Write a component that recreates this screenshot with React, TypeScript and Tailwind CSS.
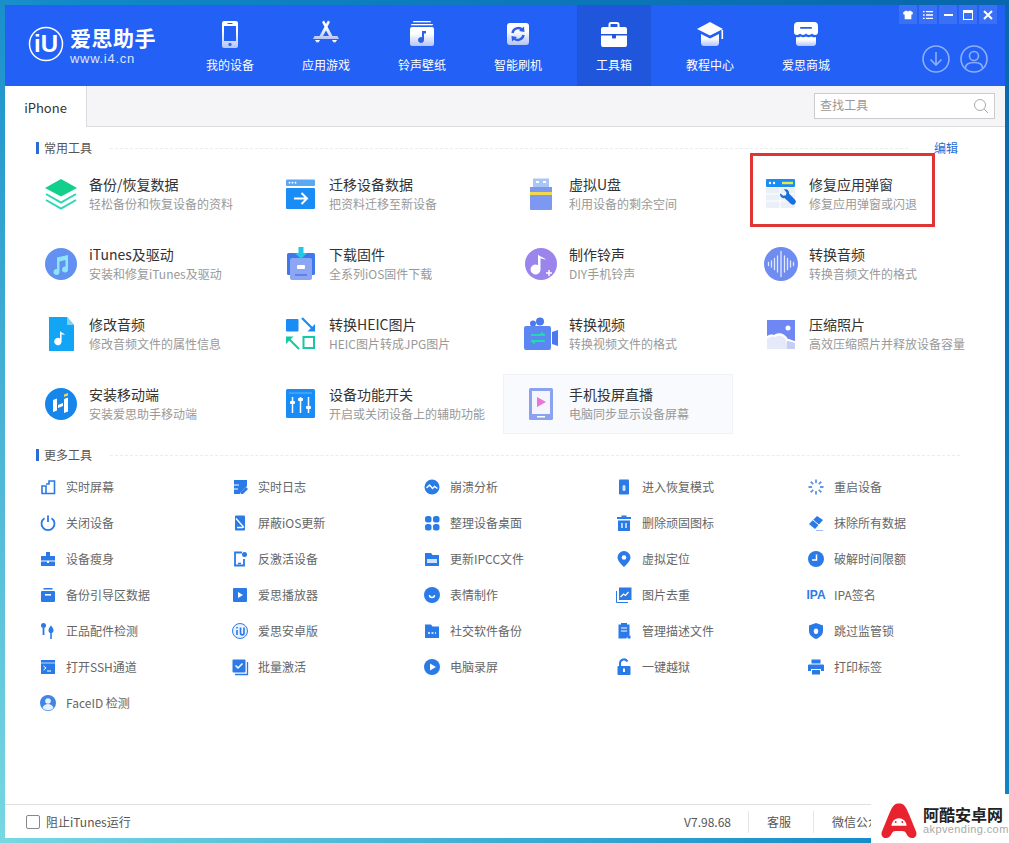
import type { ReactNode } from "react";

const F = "url(#navFill)";
const B = "#2a7ae8";

const navItems: { label: string; active?: boolean; icon: ReactNode }[] = [
  {
    label: "我的设备",
    icon: (
      <>
        <path fill={F} fillRule="evenodd" d="M9 2h12a2 2 0 0 1 2 2v23a2 2 0 0 1-2 2H9a2 2 0 0 1-2-2V4a2 2 0 0 1 2-2Zm0 5v15h12V7H9Zm3.500-3v1h5V4h-5Z" />
        <circle cx="15" cy="25.500" r="1.700" fill="#3d6cf0" />
      </>
    ),
  },
  {
    label: "应用游戏",
    icon: (
      <>
        <path fill={F} d="M11 3 13 1.500l2 3.500 2-3.500L19 3l-2.500 4.700L21.500 17H26.500l1.500 3H2l1.500-3h5L13.500 7.700Zm1 14h6l-3-5.500Z" />
        <path fill={F} d="M4 21h5l-1.500 2.500H5.500ZM21 21h5l-1.500 2.500h-2Z" />
      </>
    ),
  },
  {
    label: "铃声壁纸",
    icon: (
      <>
        <rect x="6" y="2" width="18" height="1.500" rx=".7" fill={F} />
        <rect x="4" y="5" width="22" height="1.500" rx=".7" fill={F} />
        <rect x="3" y="8" width="24" height="19" rx="2" fill={F} />
        <path fill="#2f5fe8" d="M15 12h4v2.500h-2V21a3 3 0 1 1-2-2.800Z" />
      </>
    ),
  },
  {
    label: "智能刷机",
    icon: (
      <>
        <rect x="4" y="4" width="22" height="22" rx="3" fill={F} />
        <path fill="none" stroke="#2f5fe8" strokeWidth="2.400" d="M9.500 14a5.800 5.800 0 0 1 10-3M20.500 16a5.800 5.800 0 0 1-10 3" />
        <path fill="#2f5fe8" d="m21 7.500.5 5.500-5.500-1ZM9 22.500 8.500 17l5.500 1Z" />
      </>
    ),
  },
  {
    label: "工具箱",
    active: true,
    icon: (
      <>
        <path fill="none" stroke="#fff" strokeWidth="2" d="M10.500 9V5.500a1.500 1.500 0 0 1 1.500-1.500h6a1.500 1.500 0 0 1 1.500 1.500V9" />
        <path fill="#fff" d="M4 8h22a2 2 0 0 1 2 2v5H2v-5a2 2 0 0 1 2-2ZM2 16.500h11v2a1 1 0 0 0 1 1h2a1 1 0 0 0 1-1v-2h11V26a2 2 0 0 1-2 2H4a2 2 0 0 1-2-2Z" />
      </>
    ),
  },
  {
    label: "教程中心",
    icon: (
      <>
        <path fill="#fff" d="M15 3 28 10 15 16.500 2 10Z" />
        <path fill={F} d="M6 15l9 4.500 9-4.500v9a3 3 0 0 1-3 3H9a3 3 0 0 1-3-3Z" />
        <rect x="26.500" y="11" width="1.600" height="9" fill="#fff" />
      </>
    ),
  },
  {
    label: "爱思商城",
    icon: (
      <>
        <path fill="#fff" d="M7 3h16a4 4 0 0 1 4 4v6a3 3 0 0 1-3 3c-1.500 0-2.500-1-3-1.500-.6.500-1.700 1.500-3 1.500s-2.400-1-3-1.500c-.6.500-1.700 1.500-3 1.500s-2.400-1-3-1.500c-.5.500-1.500 1.500-3 1.500a3 3 0 0 1-3-3V7a4 4 0 0 1 4-4Z" />
        <rect x="9" y="8" width="12" height="1.800" rx=".9" fill="#2f5fe8" />
        <path fill={F} d="M5 18c1.500.6 3 .5 4.500-.5 1.800 1 3.700 1 5.500 0 1.800 1 3.700 1 5.500 0 1.500 1 3 1.100 4.500.5v6a3 3 0 0 1-3 3H8a3 3 0 0 1-3-3Z" />
      </>
    ),
  },
];

const Big = ({ children }: { children: ReactNode }) => (
  <svg viewBox="0 0 36 36" className="h-[36px] w-[36px] shrink-0">
    {children}
  </svg>
);

const tools: { title: string; sub: string; hover?: boolean; boxed?: boolean; icon?: ReactNode }[] = [
  {
    title: "备份/恢复数据",
    sub: "轻松备份和恢复设备的资料",
    icon: (
      <>
        <path fill="#12cf8c" d="M18 3 34 12 18 20.500 2 12Z" />
        <path fill="none" stroke="#2cd5b5" strokeWidth="2" d="m3 18 15 8.500L33 18" />
        <path fill="none" stroke="#2cd5b5" strokeWidth="2" d="m3 24 15 8.500L33 24" />
      </>
    ),
  },
  {
    title: "迁移设备数据",
    sub: "把资料迁移至新设备",
    icon: (
      <>
        <rect x="3" y="3.500" width="29" height="6.500" rx="1" fill="#5aa8f2" />
        <circle cx="6.500" cy="6.700" r=".9" fill="#fff" />
        <circle cx="9.500" cy="6.700" r=".9" fill="#fff" />
        <circle cx="12.500" cy="6.700" r=".9" fill="#fff" />
        <rect x="3" y="12" width="29" height="21" rx="1" fill="#1a8cf6" />
        <path fill="none" stroke="#fff" strokeWidth="2" d="M11 22.500h13M18.500 17l5.500 5.500-5.500 5.500" />
      </>
    ),
  },
  {
    title: "虚拟U盘",
    sub: "利用设备的剩余空间",
    icon: (
      <>
        <path fill="#a9c6f6" d="M10 2.500h16V11H10Z" />
        <rect x="13" y="5" width="3" height="2" fill="#fff" />
        <rect x="20" y="5" width="3" height="2" fill="#fff" />
        <path fill="#7c98f0" d="M7 11h22v22a1 1 0 0 1-1 1H8a1 1 0 0 1-1-1Z" />
        <rect x="7" y="16" width="22" height="3" fill="#f2d94b" />
      </>
    ),
  },
  {
    title: "修复应用弹窗",
    sub: "修复应用弹窗或闪退",
    boxed: true,
    icon: (
      <>
        <rect x="3" y="12" width="29" height="20" fill="#eaeff8" />
        <path stroke="#fff" d="M3 18h29M3 25h29M17 12v20" />
        <rect x="3" y="3" width="29" height="8" rx="1" fill="#1a8cf6" />
        <circle cx="7" cy="7" r="1.200" fill="#fff" />
        <circle cx="11" cy="7" r="1.200" fill="#fff" />
        <rect x="19" y="5.800" width="11" height="2.400" fill="#e6e84a" />
        <path fill="#1670e0" d="M21 13.500c2.800-1 5.500 1.200 5 4l6 6.300c1 1 1.200 2.300.3 3.400l-1 1c-1 1-2.300.8-3.300-.1l-6.500-6c-2.700.5-5-2-4.300-4.800l3 2.500 2.700-.5.600-2.700Z" />
      </>
    ),
  },
  {
    title: "iTunes及驱动",
    sub: "安装和修复iTunes及驱动",
    icon: (
      <>
        <circle cx="18" cy="18" r="16" fill="#6391f2" />
        <path fill="#8ce5f5" d="M14 11.500 25 9v14.500a3 3 0 1 1-2.500-3V14l-6 1.400v10.600a3 3 0 1 1-2.500-3Z" />
      </>
    ),
  },
  {
    title: "下载固件",
    sub: "全系列iOS固件下载",
    icon: (
      <>
        <rect x="4" y="7" width="28" height="22" rx="1.500" fill="#3e78ea" />
        <rect x="7" y="12" width="22" height="22" rx="2" fill="#8ca6f5" />
        <rect x="14" y="19" width="8" height="4" rx="1" fill="#fff" />
        <rect x="12" y="28" width="12" height="2" fill="#5f82ea" />
        <path fill="#22c8e8" d="M15.500 1h5v6h3.500L18 13l-6-6h3.500Z" />
      </>
    ),
  },
  {
    title: "制作铃声",
    sub: "DIY手机铃声",
    icon: (
      <>
        <circle cx="18" cy="18" r="16" fill="#9b85ec" />
        <path fill="#fff" d="M15 8.500c3 3 6 2.500 8 5.500-2-1-4-1.500-5.500-1.500v11a5 5 0 1 1-2.500-4.300Z" />
        <path stroke="#fff" strokeWidth="1.500" d="M26 24v6M23 27h6" />
      </>
    ),
  },
  {
    title: "转换音频",
    sub: "转换音频文件的格式",
    icon: (
      <>
        <circle cx="18" cy="18" r="17" fill="#6f8cf0" />
        <path stroke="#dfe8ff" strokeWidth="1.300" strokeLinecap="round" d="M5.500 16.500v3M8.500 15v6M11.500 12.500v11M14.500 10v16M18 5.500v25M21.500 10v16M24.500 12.500v11M27.500 15v6M30.500 16.500v3" />
      </>
    ),
  },
  {
    title: "修改音频",
    sub: "修改音频文件的属性信息",
    icon: (
      <>
        <path fill="#12a5f5" d="M6 1h18l7 8v26H6Z" />
        <path fill="#7fd0fa" d="M24 1l7 8h-7Z" />
        <path fill="#fff" d="M17 15c1.500 2 4 2 5 4-1.500-.5-2.600-.8-3.400-.8v7.300a3.700 3.700 0 1 1-1.600-3Z" />
      </>
    ),
  },
  {
    title: "转换HEIC图片",
    sub: "HEIC图片转成JPG图片",
    icon: (
      <>
        <rect x="3" y="3" width="12.500" height="12.500" rx="1" fill="#1a8cf6" />
        <path fill="none" stroke="#1a8cf6" strokeWidth="2.200" d="m19 2 12 12" />
        <path fill="#1a8cf6" d="M32 8v7.500h-7.500Z" />
        <path fill="none" stroke="#16c9a5" strokeWidth="2" d="M20.500 21h10.500v11H20.500ZM16 33 5 22" />
        <path fill="#16c9a5" d="M3 28v-7.500h7.500Z" />
      </>
    ),
  },
  {
    title: "转换视频",
    sub: "转换视频文件的格式",
    icon: (
      <>
        <circle cx="10" cy="7.500" r="3" fill="#4b79ee" />
        <circle cx="17" cy="5.500" r="4" fill="#4b79ee" />
        <rect x="1" y="10" width="27" height="24" rx="2" fill="#5c86f2" />
        <path fill="#4b79ee" d="M29 16l6-2v16l-6-2Z" />
        <path stroke="#22d8b0" strokeWidth="1.800" d="M8 19h14M8 25h14" />
        <path fill="#22d8b0" d="m18 15.500 5 3.500h-5ZM12 28.500 7 25h5Z" />
      </>
    ),
  },
  {
    title: "压缩照片",
    sub: "高效压缩照片并释放设备容量",
    icon: (
      <>
        <path fill="#6f87f2" d="M4 4h28v21c-4-1-5-2-7-2-3-6-10-7-14-4-3-1-5 0-7 1Z" />
        <circle cx="25" cy="12" r="2.500" fill="#fff" />
        <path fill="#e6eaf8" d="M4 23c3-2 5-3 8-2 5-3 10-1 12 6v6H4Z" />
        <path fill="#c5cff5" d="M24 25c3 0 5 1 8 2v6h-8Z" />
      </>
    ),
  },
  {
    title: "安装移动端",
    sub: "安装爱思助手移动端",
    icon: (
      <>
        <circle cx="18" cy="18" r="16" fill="#1686ec" />
        <path fill="#fff" d="m10 14 4-1.500v12l-4 1.500ZM21 13l4-1.500v14l-4 1.500ZM15 19l5-2v3l-5 2Z" />
        <path fill="#f5d94b" d="m21 8.500 4-1.500v2.500l-4 1.500Z" />
      </>
    ),
  },
  {
    title: "设备功能开关",
    sub: "开启或关闭设备上的辅助功能",
    icon: (
      <>
        <rect x="3" y="3" width="29" height="29" rx="1.500" fill="#1a8cf6" />
        <path stroke="#64b5fa" d="M6 7h23" />
        <path stroke="#fff" strokeWidth="1.500" d="M9.500 11v16M17.500 11v16M25.500 11v16" />
        <rect x="7" y="15" width="5" height="3" rx="1" fill="#fff" />
        <rect x="15" y="12" width="5" height="3" rx="1" fill="#fff" />
        <rect x="23" y="20" width="5" height="3" rx="1" fill="#fff" />
      </>
    ),
  },
  {
    title: "手机投屏直播",
    sub: "电脑同步显示设备屏幕",
    hover: true,
    icon: (
      <>
        <rect x="6" y="2" width="24" height="32" rx="1.500" fill="#8ba2f0" />
        <rect x="9" y="5" width="18" height="23" fill="#f4f5fd" />
        <path fill="#ec72d8" d="M14 11l9 5-9 5Z" />
        <rect x="14" y="30" width="8" height="1.500" fill="#fff" />
      </>
    ),
  },
  { title: "", sub: "" },
];

const Small = ({ children }: { children: ReactNode }) => (
  <svg viewBox="0 0 18 18" className="h-[18px] w-[18px]">
    {children}
  </svg>
);

const more: { label: string; icon: ReactNode }[] = [
  { label: "实时屏幕", icon: <><path fill="none" stroke={B} strokeWidth="1.600" d="M7 6h3V3h5.500v12.500H3V8h4v7.500" /></> },
  { label: "实时日志", icon: <><path fill={B} d="M3 2h13v6l-6 6-1 2H3Z" /><path fill={B} d="m15 9 2 2-5 5H10v-2Z" /><path stroke="#fff" d="M3 7h5M3 11h4" /></> },
  { label: "崩溃分析", icon: <><circle cx="9" cy="9" r="7.500" fill={B} /><path fill="none" stroke="#fff" strokeWidth="1.400" d="m3.500 10 3-3 3 3.500 2-2 3 2" /></> },
  { label: "进入恢复模式", icon: <><rect x="4" y="1.500" width="10" height="15" rx="1" fill={B} /><rect x="7.500" y="7" width="3" height="6" rx="1.500" fill="#cfe2ff" /></> },
  { label: "重启设备", icon: <><path stroke="#5f96ea" strokeWidth="1.800" d="M9 1.500v3.500M9 13v3.500M1.500 9H5M13 9h3.500M3.700 3.700l2.500 2.500M11.800 11.800l2.500 2.500M3.700 14.300l2.500-2.500M11.800 6.200l2.500-2.500" /></> },
  { label: "关闭设备", icon: <><path fill="none" stroke={B} strokeWidth="1.800" d="M5.500 4.200a6.500 6.500 0 1 0 7 0M9 1.500V8" /></> },
  { label: "屏蔽iOS更新", icon: <><rect x="4" y="1.500" width="10" height="15" rx="1" fill={B} /><path stroke="#fff" strokeWidth="1.300" d="m5 4.500 8 9M6 13.500h6" /></> },
  { label: "整理设备桌面", icon: <><rect x="2" y="2" width="6.500" height="6.500" rx="2.500" fill={B} /><rect x="10" y="2" width="6.500" height="6.500" rx="2.500" fill={B} /><rect x="2" y="10" width="6.500" height="6.500" rx="2.500" fill={B} /><rect x="10" y="10" width="6.500" height="6.500" rx="2.500" fill={B} /></> },
  { label: "删除顽固图标", icon: <><path fill={B} d="M6.500 1.500h5V3H16v2H2V3h4.500ZM3 6.500h12V17H3Z" /><path stroke="#fff" strokeWidth="1.300" d="M7 9v5M11 9v5" /></> },
  { label: "抹除所有数据", icon: <><path fill={B} d="m2 10 8-8 6 4-8 9Z" /><path stroke="#fff" d="m6 6 6 5" /><path stroke="#9cc0f5" d="M9 16.500h7" /></> },
  { label: "设备瘦身", icon: <><path fill={B} d="M7 2h4v4h5v4.500H2V6h5Z" /><path fill={B} d="M2 11.500h6v1.500h2v-1.500h6V16H2Z" /></> },
  { label: "反激活设备", icon: <><path fill="none" stroke={B} strokeWidth="1.800" d="M11 2.500H4v13h9V9" /><path stroke={B} strokeWidth="1.500" d="M7 13.500h3" /><circle cx="13.500" cy="4.500" r="2.500" fill={B} /></> },
  { label: "更新IPCC文件", icon: <><path fill={B} d="M2 3h6l1.500 2H16v11H2Z" /><rect x="4" y="9" width="10" height="4" fill="#cfe2ff" /></> },
  { label: "虚拟定位", icon: <><path fill={B} d="M9 1a6.500 6.500 0 0 1 6.500 6.500C15.500 11.500 9 17 9 17S2.500 11.500 2.500 7.500A6.500 6.500 0 0 1 9 1Z" /><circle cx="9" cy="7.500" r="2.300" fill="#fff" /></> },
  { label: "破解时间限额", icon: <><circle cx="9" cy="9" r="8" fill={B} /><path fill="none" stroke="#fff" strokeWidth="1.500" d="M9.500 4.500V10H5" /></> },
  { label: "备份引导区数据", icon: <><path fill={B} d="M4.500 2h9v1.500h-9ZM3 5h12a1 1 0 0 1 1 1v9a1 1 0 0 1-1 1H3a1 1 0 0 1-1-1V6a1 1 0 0 1 1-1Z" /><rect x="6" y="8" width="6" height="1.600" fill="#fff" /></> },
  { label: "爱思播放器", icon: <><rect x="2" y="2" width="14" height="14" rx="1" fill={B} /><path fill="#fff" d="m7 6 5 3-5 3Z" /></> },
  { label: "表情制作", icon: <><circle cx="9" cy="9" r="8" fill={B} /><path fill="none" stroke="#fff" strokeWidth="1.400" d="M6.500 9a2.500 2.500 0 0 0 5 0" /></> },
  { label: "图片去重", icon: <><rect x="4" y="1.500" width="12.500" height="12.500" fill={B} /><path fill="none" stroke={B} d="M1.500 5v11.500H13" /><path fill="none" stroke="#fff" strokeWidth="1.200" d="m5.500 11 3-3 2 1.500 3-3.500" /></> },
  {
    label: "IPA签名",
    icon: <span className="block w-[24px] text-center text-[12px] leading-[18px] font-bold text-[#2a7ae8] [font-family:'Liberation_Sans',sans-serif]">IPA</span>,
  },
  { label: "正品配件检测", icon: <><circle cx="4.500" cy="3.500" r="2.500" fill={B} /><path stroke={B} strokeWidth="1.800" d="M4.500 6v7" /><path fill={B} d="M12 3.500c1.800 2 2.500 3.500 2.500 5s-1 2.500-1.700 2.500v6h-1.600v-6c-.7 0-1.700-1-1.700-2.500s.7-3 2.500-5Z" /></> },
  { label: "爱思安卓版", icon: <><circle cx="9" cy="9" r="7.500" fill="#eaf2ff" stroke={B} /><path fill="none" stroke={B} strokeWidth="1.600" d="M6 8v5M9.500 5.500V11c0 2.500 3.500 2.500 3.500 0V5.500" /><path stroke={B} strokeWidth="1.600" d="M6 5v1.500" /></> },
  { label: "社交软件备份", icon: <><path fill={B} d="M2 2.500h6l1.500 2H16V16H2Z" /><path stroke="#fff" strokeWidth="1.600" strokeDasharray="2 1.500" d="M5 11h8" /></> },
  { label: "管理描述文件", icon: <><path fill={B} d="M6 1h6v1.500h2.500V13l-3.500 3.500H3.500v-14H6Z" /><path stroke="#fff" d="M6 6h6M6 9h6" /><rect x="12.500" y="13.500" width="3" height="3" fill={B} /></> },
  { label: "跳过监管锁", icon: <><path fill={B} d="M9 1 16 3.500V9c0 4-3.500 6.500-7 8-3.500-1.500-7-4-7-8V3.500Z" /><rect x="6.800" y="6.500" width="4.400" height="5.500" rx="2.200" fill="#fff" /></> },
  { label: "打开SSH通道", icon: <><rect x="2" y="2" width="14" height="14" fill={B} /><path stroke="#bcd6fa" d="M2 5h14" /><path fill="none" stroke="#fff" d="m4.500 8 2.500 2-2.500 2M8 13h4" /></> },
  { label: "批量激活", icon: <><rect x="1.500" y="1.500" width="13" height="13" rx="1" fill={B} /><path fill="none" stroke="#fff" strokeWidth="1.500" d="m4.500 7.500 2.500 2.500 4.500-4.500" /><path fill="none" stroke={B} strokeWidth="1.300" d="M16.500 4v12.500H4" /></> },
  { label: "电脑录屏", icon: <><circle cx="9" cy="9" r="8" fill={B} /><path fill="#fff" d="m7 5.500 6 3.500-6 3.500Z" /></> },
  { label: "一键越狱", icon: <><path fill="none" stroke={B} strokeWidth="2" d="M5 8V5a4 4 0 0 1 7.500-1.500" /><rect x="2.500" y="8" width="13" height="9" rx="1" fill={B} /><rect x="8" y="10.500" width="2" height="3.500" fill="#fff" /></> },
  { label: "打印标签", icon: <><rect x="4.500" y="1.500" width="9" height="4" fill={B} /><path fill={B} d="M2 6.500h14a1 1 0 0 1 1 1V13h-3v-2H4v2H1V7.500a1 1 0 0 1 1-1Z" /><rect x="5" y="12" width="8" height="4.500" fill={B} /></> },
  { label: "FaceID 检测", icon: <><circle cx="9" cy="9" r="8" fill="#3f84e8" /><circle cx="9" cy="7" r="2.800" fill="#e8f1ff" /><path fill="#e8f1ff" d="M3.500 14c1-3 3-4 5.500-4s4.500 1 5.500 4c-3 3-8 3-11 0Z" /></> },
];

function SectionHead({ title, edit }: { title: string; edit?: boolean }) {
  return (
    <div className="flex h-[16px] items-center pl-[31px] pr-[45px]">
      <span className="h-[12px] w-[3px] bg-[#2a6bd4]" />
      <span className="ml-[5px] text-[12px] leading-[16px] text-[#555]">{title}</span>
      <span className={`ml-[18px] h-0 flex-1 border-t border-dashed border-[#ececec] ${edit ? "mr-[26px]" : ""}`} />
      {edit && <span className="mr-[2px] text-[12px] leading-[16px] text-[#2a6bd4]">编辑</span>}
    </div>
  );
}

export default function App() {
  return (
    <div className="relative flex h-[843px] w-[1009px] flex-col overflow-hidden bg-[linear-gradient(45deg,#78d8e2_0%,#1088c8_50%,#0866ac_100%)] pt-[5px] pr-[4px] pb-[5px] pl-[5px] font-['Noto_Sans_CJK_SC','Noto_Sans',sans-serif]">
      <svg className="absolute h-0 w-0">
        <defs>
          <linearGradient id="navFill" x1="0" y1="0" x2="0" y2="1">
            <stop offset="0.35" stopColor="#ffffff" />
            <stop offset="1" stopColor="#b4c4f5" />
          </linearGradient>
        </defs>
      </svg>

      {/* top bar */}
      <header className="flex h-[81px] shrink-0 bg-[#2360f5]">
        <div className="flex w-[188px] shrink-0 items-start pt-[20px] pl-[23px]">
          <svg viewBox="0 0 36 36" className="mt-[1px] h-[36px] w-[36px] shrink-0">
            <circle cx="18" cy="18" r="16.500" fill="none" stroke="#fff" strokeWidth="1.500" />
            <text x="18" y="26" textAnchor="middle" fontSize="24" fontWeight="700" fill="#fff" fontFamily="Liberation Sans, sans-serif">iU</text>
          </svg>
          <div className="ml-[6px] flex flex-col">
            <span className="text-[21px] leading-[24px] font-bold tracking-[0.5px] whitespace-nowrap text-white">爱思助手</span>
            <span className="mt-[3px] text-[13px] leading-[14px] tracking-[0.7px] text-[#dbe6ff] [font-family:'Liberation_Sans',sans-serif]">www.i4.cn</span>
          </div>
        </div>
        <nav className="flex gap-[22px]">
          {navItems.map((n) => (
            <div key={n.label} className={`flex h-[81px] w-[74px] flex-col items-center pt-[14px] ${n.active ? "bg-[#1f56dc]" : ""}`}>
              <svg viewBox="0 0 30 30" className="h-[30px] w-[30px]">
                {n.icon}
              </svg>
              <span className="mt-[8px] text-[12px] leading-[16px] whitespace-nowrap text-white">{n.label}</span>
            </div>
          ))}
        </nav>
        <div className="ml-auto flex flex-col items-end pr-[8px]">
          <div className="flex gap-[2px]">
            <div className="flex h-[19px] w-[18px] items-center justify-center bg-[#3a70f6]">
              <svg viewBox="0 0 12 12" className="h-[10px] w-[10px]"><path fill="#fff" d="M3 1h2l1 1 1-1h2l3 2-1 3-1-.5V11H2V5.500L1 6 0 3Z" /></svg>
            </div>
            <div className="flex h-[19px] w-[18px] items-center justify-center bg-[#3a70f6]">
              <svg viewBox="0 0 12 12" className="h-[10px] w-[10px]"><path stroke="#fff" strokeWidth="1.600" d="M0 2h2M3.500 2H12M0 6h2M3.500 6H12M0 10h2M3.500 10H12" /></svg>
            </div>
            <div className="flex h-[19px] w-[18px] items-center justify-center bg-[#3a70f6]">
              <span className="h-[2px] w-[9px] bg-white" />
            </div>
            <div className="flex h-[19px] w-[18px] items-center justify-center bg-[#3a70f6]">
              <span className="h-[10px] w-[10px] border border-t-[3px] border-white" />
            </div>
            <div className="flex h-[19px] w-[18px] items-center justify-center bg-[#3a70f6]">
              <svg viewBox="0 0 10 10" className="h-[10px] w-[10px]"><path stroke="#fff" strokeWidth="2" d="m1 1 8 8M9 1 1 9" /></svg>
            </div>
          </div>
          <div className="mt-[21px] mr-[9px] flex gap-[10px]">
            <svg viewBox="0 0 28 28" className="h-[28px] w-[28px]">
              <circle cx="14" cy="14" r="13" fill="none" stroke="#8eaefa" strokeWidth="1.600" />
              <path fill="none" stroke="#8eaefa" strokeWidth="1.600" d="M14 7v13M8.500 14.500 14 20l5.500-5.500" />
            </svg>
            <svg viewBox="0 0 28 28" className="h-[28px] w-[28px]">
              <circle cx="14" cy="14" r="13" fill="none" stroke="#8eaefa" strokeWidth="1.600" />
              <circle cx="14" cy="11" r="4.500" fill="none" stroke="#8eaefa" strokeWidth="1.600" />
              <path fill="none" stroke="#8eaefa" strokeWidth="1.600" d="M5.500 23c0-4 4-5.500 8.500-5.500s8.500 1.500 8.500 5.500" />
            </svg>
          </div>
        </div>
      </header>

      {/* tab row */}
      <div className="flex h-[41px] shrink-0 items-start justify-between border-b border-[#dcdcdc] bg-[#f5f5f7]">
        <div className="flex h-[41px] w-[82px] items-center justify-center border-r border-[#dcdcdc] bg-white pt-[2px] text-[13px] text-[#333]">iPhone</div>
        <div className="mt-[7px] mr-[10px] flex h-[26px] w-[181px] items-center justify-between border border-[#cccccc] bg-white px-[5px]">
          <span className="mb-[2px] text-[12px] leading-[16px] text-[#999]">查找工具</span>
          <svg viewBox="0 0 16 16" className="h-[16px] w-[16px]">
            <circle cx="7" cy="7" r="5.500" fill="none" stroke="#aaa" />
            <path stroke="#aaa" d="m11 11 4 4" />
          </svg>
        </div>
      </div>

      {/* main */}
      <main className="min-h-0 flex-1 bg-white pt-[13px]">
        <SectionHead title="常用工具" edit />
        <div className="mt-[8px] grid grid-cols-[repeat(4,230px)] gap-[10px] pl-[18px]">
          {tools.map((t, i) =>
            t.title ? (
              <div key={t.title} className={`relative flex h-[60px] items-center gap-[10px] ${t.hover ? "border border-[#f0f2f6] bg-[#f8fafd] pl-[19px]" : "pl-[20px]"}`}>
                <Big>{t.icon}</Big>
                <div className="flex flex-col whitespace-nowrap">
                  <span className="mb-[2px] text-[14px] leading-[18px] text-[#333]">{t.title}</span>
                  <span className="text-[12px] leading-[18px] text-[#999]">{t.sub}</span>
                </div>
                {t.boxed && <span className="absolute top-[-11px] left-[7px] h-[74px] w-[185px] border-[3px] border-[#e03535]" />}
              </div>
            ) : (
              <div key={i} />
            ),
          )}
        </div>

        <div className="mt-[13px]">
          <SectionHead title="更多工具" />
        </div>
        <div className="mt-[6px] grid grid-cols-[repeat(5,192px)] pl-[31px]">
          {more.map((m) => (
            <div key={m.label} className="flex h-[36px] items-center gap-[6px]">
              <div className="flex w-[24px] shrink-0 justify-center">
                {m.label === "IPA签名" ? m.icon : <Small>{m.icon}</Small>}
              </div>
              <span className="text-[12px] leading-[16px] whitespace-nowrap text-[#666]">{m.label}</span>
            </div>
          ))}
        </div>
      </main>

      {/* status bar */}
      <footer className="flex h-[34px] shrink-0 items-center border-t border-[#e0e0e0] bg-white pl-[21px] text-[12px] text-[#555]">
        <span className="h-[14px] w-[14px] rounded-[2px] border border-[#888]" />
        <span className="ml-[6px]">阻止iTunes运行</span>
        <span className="ml-auto">V7.98.68</span>
        <span className="ml-[17px] h-[22px] w-px bg-[#e5e5e5]" />
        <span className="ml-[18px]">客服</span>
        <span className="ml-[22px] h-[22px] w-px bg-[#e5e5e5]" />
        <span className="mr-[113px] ml-[18px] whitespace-nowrap">微信公众号</span>
      </footer>

      {/* site watermark over the corner */}
      <div className="absolute right-0 bottom-0 flex h-[49px] w-[138px] items-end bg-white pb-[4px] pl-[9px]">
        <svg viewBox="0 0 40 38" className="h-[36px] w-[38px] shrink-0">
          <path fill="#e8222e" d="M15 2c2.500-2 7.500-2 10 0 2 1.500 3.500 5 6 11l7 17c1.500 4-1 7-4 7-3.500 0-5-2-6.500-5-.8-1.700-2-2.500-4-2.500h-7c-2 0-3.200.8-4 2.500-1.500 3-3 5-6.500 5-3 0-5.500-3-4-7l7-17c2.500-6 4-9.500 6-11Z" />
          <path fill="#fff" d="M12 24a8 8 0 0 1 16 0Z" />
          <circle cx="16.500" cy="20" r="1" fill="#e8222e" />
          <circle cx="23.500" cy="20" r="1" fill="#e8222e" />
        </svg>
        <div className="mb-[4px] ml-[5px] flex flex-col">
          <span className="text-[16px] leading-[18px] font-bold whitespace-nowrap text-[#222]">阿酷安卓网</span>
          <span className="text-[11px] leading-[12px] tracking-[0.4px] whitespace-nowrap text-[#aaa] [font-family:'Liberation_Sans',sans-serif]">akpvending.com</span>
        </div>
      </div>
    </div>
  );
}
